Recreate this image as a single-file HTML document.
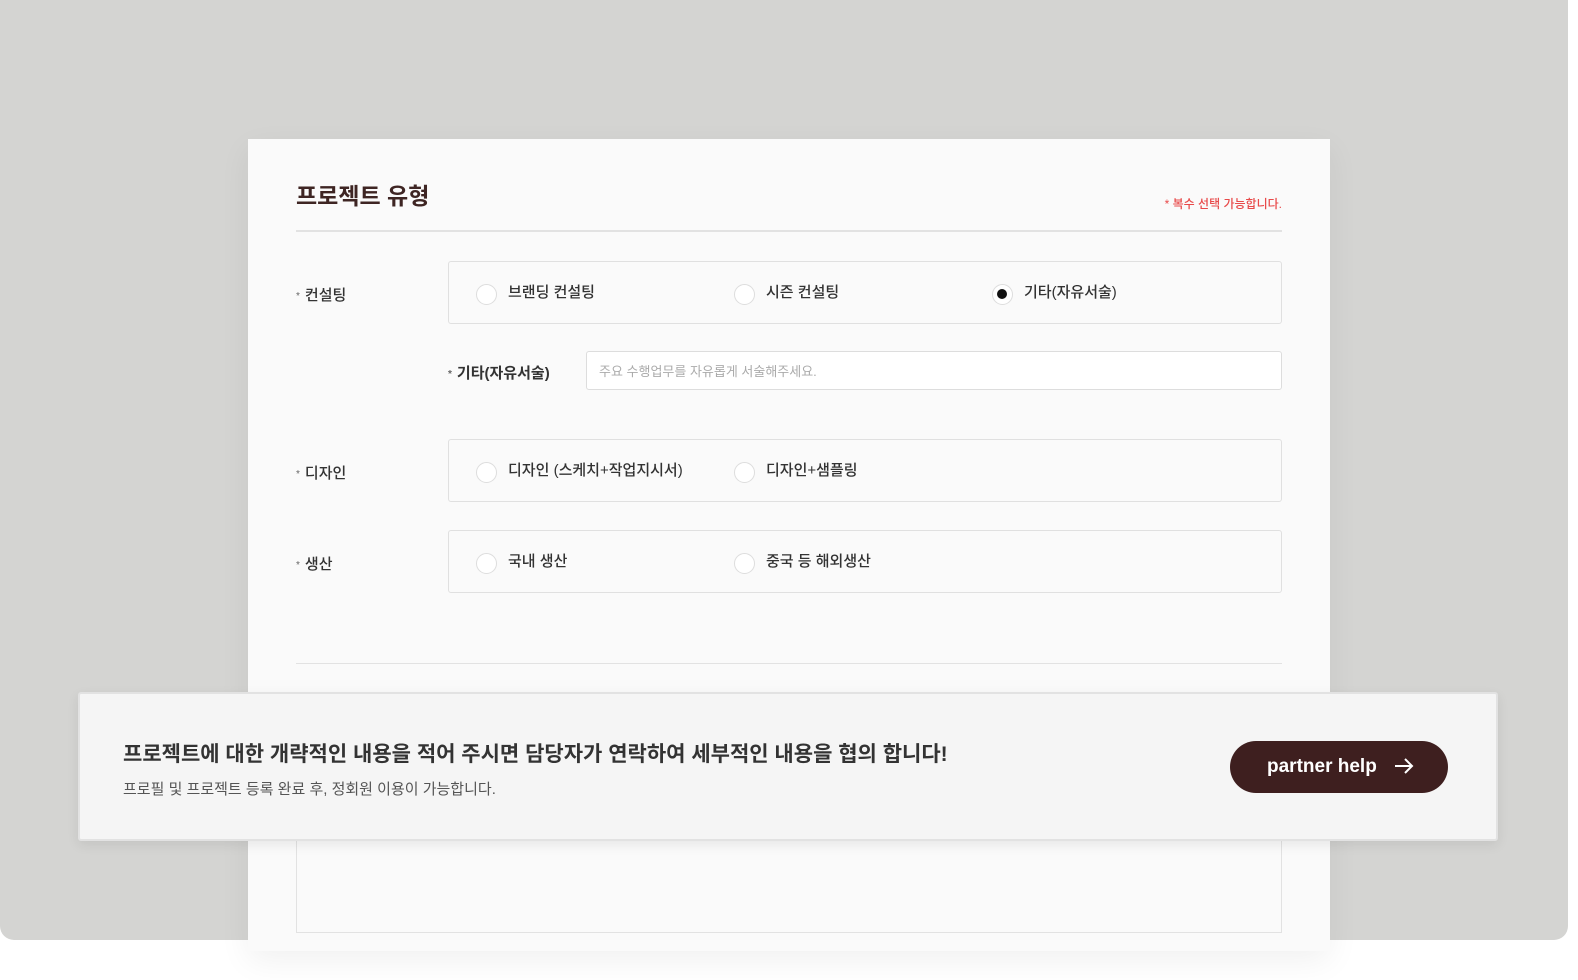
<!DOCTYPE html>
<html><head><meta charset="utf-8"><style>
*{margin:0;padding:0;box-sizing:border-box}
body{width:1578px;height:980px;background:#fff;position:relative;overflow:hidden;font-family:"Liberation Sans","Noto Sans CJK KR",sans-serif;color:#222}
.bg{position:absolute;left:0;top:0;width:1568px;height:940px;background:#d4d4d2;border-radius:0 0 14px 14px}
.card{position:absolute;left:248px;top:139px;width:1082px;height:812px;background:#fafafa;box-shadow:0 10px 30px rgba(0,0,0,.06)}
.abs{position:absolute}
h1{position:absolute;left:48px;top:38px;font-size:23px;font-weight:700;color:#3e2523}
.note{position:absolute;right:48px;top:56px;font-size:12px;color:#e84a4a;font-weight:500}
.line{position:absolute;left:48px;width:986px;height:2px;background:#e2e2e2}
.box{position:absolute;left:200px;width:834px;height:63px;border:1px solid #e0e0e0;border-radius:3px;background:#fafafa}
.lab{position:absolute;left:48px;font-size:15px;color:#333;font-weight:500}
.lab:before{content:"*";font-size:10px;color:#666;margin-right:5px;position:relative;top:-1px}
.opt{position:absolute;top:21px;font-size:15px;color:#333;padding-left:32px;line-height:20px;font-weight:500}
.opt:before{content:"";position:absolute;left:0;top:1px;width:19px;height:19px;border:1px solid #ddd;border-radius:50%;background:#fff}
.opt.on:after{content:"";position:absolute;left:5px;top:6px;width:10px;height:10px;border-radius:50%;background:#111}
.input{position:absolute;left:338px;top:212px;width:696px;height:39px;border:1px solid #ddd;border-radius:3px;background:#fff;font-size:13px;color:#aaa;padding:9px 12px}
.banner{position:absolute;left:78px;top:692px;width:1420px;height:149px;background:#f5f5f5;border:2px solid #e2e2e2;border-radius:3px;box-shadow:0 4px 12px rgba(0,0,0,.08)}
.btn{position:absolute;left:1230px;top:741px;width:218px;height:52px;border-radius:26px;background:#3e1f1f;color:#fff;font-size:19px;font-weight:700;padding:15px 0 0 37px}
.btn svg{position:absolute;left:164px;top:17px}
</style></head><body>
<div class="bg"></div>
<div class="card">
<h1>프로젝트 유형</h1>
<div class="note">* 복수 선택 가능합니다.</div>
<div class="line" style="top:91px"></div>
<div class="lab" style="top:145px">컨설팅</div>
<div class="box" style="top:122px">
<div class="opt" style="left:27px">브랜딩 컨설팅</div>
<div class="opt" style="left:285px">시즌 컨설팅</div>
<div class="opt on" style="left:543px">기타(자유서술)</div>
</div>
<div class="lab" style="left:200px;top:223px;font-weight:700">기타(자유서술)</div>
<div class="input">주요 수행업무를 자유롭게 서술해주세요.</div>
<div class="lab" style="top:323px">디자인</div>
<div class="box" style="top:300px">
<div class="opt" style="left:27px">디자인 (스케치+작업지시서)</div>
<div class="opt" style="left:285px">디자인+샘플링</div>
</div>
<div class="lab" style="top:414px">생산</div>
<div class="box" style="top:391px">
<div class="opt" style="left:27px">국내 생산</div>
<div class="opt" style="left:285px">중국 등 해외생산</div>
</div>
<div class="line" style="top:524px;height:1px"></div>
<div class="abs" style="left:48px;top:680px;width:986px;height:114px;border:1px solid #e2e2e2;border-top:none;background:#fafafa"></div>
</div>
<div class="banner">
<div class="abs" style="left:43px;top:44px;font-size:21px;font-weight:700;color:#333">프로젝트에 대한 개략적인 내용을 적어 주시면 담당자가 연락하여 세부적인 내용을 협의 합니다!</div>
<div class="abs" style="left:43px;top:84px;font-size:15px;color:#555">프로필 및 프로젝트 등록 완료 후, 정회원 이용이 가능합니다.</div>
</div>
<div class="btn">partner help<svg width="20" height="16" viewBox="0 0 20 16"><path d="M1 8H18M11 1L18 8L11 15" stroke="#fff" stroke-width="2" fill="none"/></svg></div>
</body></html>
